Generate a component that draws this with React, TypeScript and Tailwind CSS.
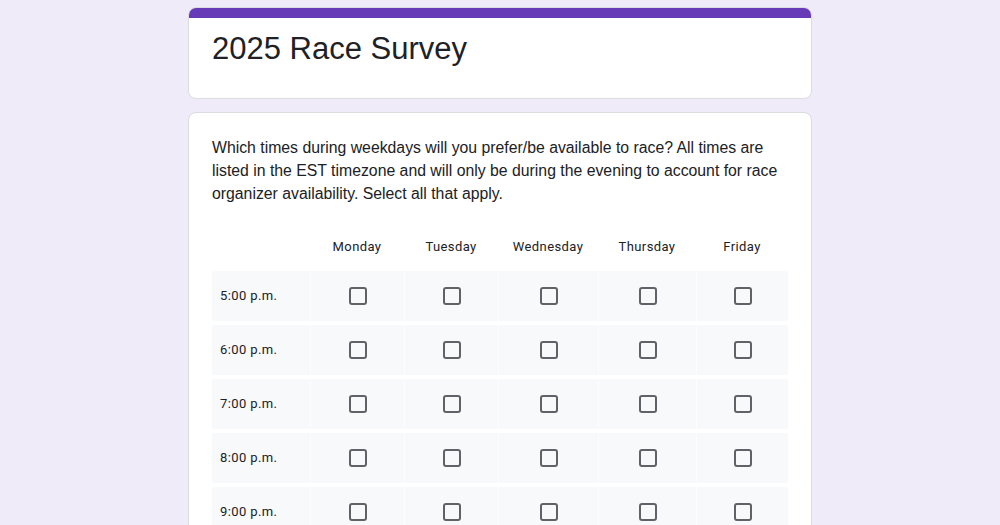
const days = ["Monday", "Tuesday", "Wednesday", "Thursday", "Friday"];
const times = ["5:00 p.m.", "6:00 p.m.", "7:00 p.m.", "8:00 p.m.", "9:00 p.m.", "10:00 p.m."];

function Box() {
  return <div className="w-[18px] h-[18px] rounded-[3px] border-2 border-[#5f6368]" />;
}

export default function App() {
  const cols = "grid grid-cols-[98px_94px_94px_100px_98px_92px]";
  return (
    <div className="min-h-screen bg-[#f0ebf8] flex flex-col items-center pt-[7px] pb-10 font-['Liberation_Sans',Arial,sans-serif] text-[#202124]">
      <div className="w-[624px] flex flex-col gap-[13px]">
        <div className="bg-white rounded-[8px] border border-[#dadce0] overflow-hidden">
          <div className="h-[10px] bg-[#673ab7]" />
          <div className="px-[23px] pt-[11px] pb-[29px]">
            <h1 className="text-[31px] leading-[40px]">2025 Race Survey</h1>
          </div>
        </div>

        <div className="bg-white rounded-[8px] border border-[#dadce0] px-[23px] pt-[23px] pb-6">
          <p className="text-[15.8px] leading-[23px]">
            Which times during weekdays will you prefer/be available to race? All times are listed in the EST
            timezone and will only be during the evening to account for race organizer availability. Select all
            that apply.
          </p>

          <div className="mt-[21px] flex flex-col gap-[4px] font-['Roboto',Arial,sans-serif] text-[13px] tracking-[0.4px] text-[#202124]">
            <div className={`${cols} h-[41px] items-center`}>
              <div />
              {days.map((d) => (
                <div key={d} className="text-center">{d}</div>
              ))}
            </div>
            {times.map((t) => (
              <div key={t} className={`${cols} h-[50px] items-stretch bg-[#f8f9fa] rounded-[2px]`}>
                <div className="flex items-center pl-2">{t}</div>
                {days.map((d) => (
                  <div key={d} className="flex items-center justify-center border-l border-white/60">
                    <Box />
                  </div>
                ))}
              </div>
            ))}
          </div>
        </div>
      </div>
    </div>
  );
}
